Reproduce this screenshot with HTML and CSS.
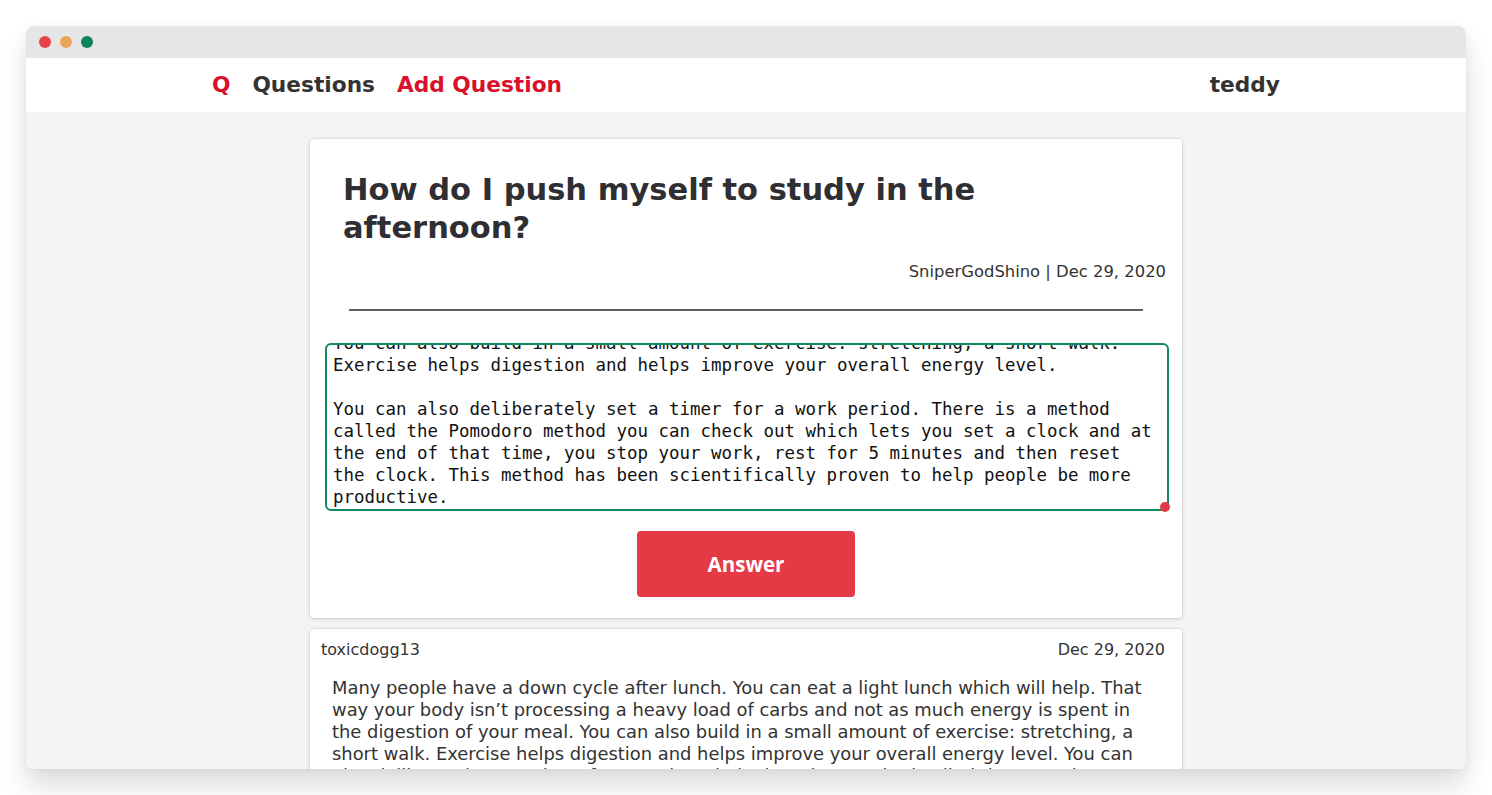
FILE: index.html
```html
<!DOCTYPE html>
<html lang="en">
<head>
<meta charset="utf-8">
<title>Question</title>
<link rel="stylesheet" href="styles.css">
</head>
<body>
<div class="window">
  <div class="titlebar">
    <span class="dot dot-red"></span>
    <span class="dot dot-orange"></span>
    <span class="dot dot-green"></span>
  </div>
  <header class="nav">
    <div class="nav-inner">
      <div class="nav-left">
        <a class="nav-link brand">Q</a>
        <a class="nav-link">Questions</a>
        <a class="nav-link accent">Add Question</a>
      </div>
      <a class="nav-link">teddy</a>
    </div>
  </header>
  <main class="main">
    <section class="card question">
      <h1 class="q-title">How do I push myself to study in the afternoon?</h1>
      <div class="q-meta">SniperGodShino | Dec 29, 2020</div>
      <hr class="divider">
      <div class="editor-wrap">
        <div class="editor">Many people have a down cycle after lunch. You can eat a light lunch which will help. That way your body isn’t processing a heavy load of carbs and not as much energy is spent in the digestion of your meal.
You can also build in a small amount of exercise: stretching, a short walk. Exercise helps digestion and helps improve your overall energy level.

You can also deliberately set a timer for a work period. There is a method called the Pomodoro method you can check out which lets you set a clock and at the end of that time, you stop your work, rest for 5 minutes and then reset the clock. This method has been scientifically proven to help people be more productive.</div>
        <span class="resize-dot"></span>
      </div>
      <button class="answer-btn">Answer</button>
    </section>
    <section class="card answer">
      <div class="a-meta">
        <span>toxicdogg13</span>
        <span>Dec 29, 2020</span>
      </div>
      <p class="a-body">Many people have a down cycle after lunch. You can eat a light lunch which will help. That way your body isn’t processing a heavy load of carbs and not as much energy is spent in the digestion of your meal. You can also build in a small amount of exercise: stretching, a short walk. Exercise helps digestion and helps improve your overall energy level. You can also deliberately set a timer for a work period. There is a method called the Pomodoro method you can check out which lets you set a clock and at the end of that time.</p>
    </section>
  </main>
</div>
</body>
</html>
```

FILE: styles.css
```css
* { box-sizing: border-box; }

html, body {
  margin: 0;
  height: 795px;
  background: #ffffff;
}

body {
  padding: 26px;
  font-family: "DejaVu Sans", "Liberation Sans", sans-serif;
  color: #333333;
  overflow: hidden;
}

.window {
  height: 743px;
  border-radius: 8px;
  overflow: hidden;
  display: flex;
  flex-direction: column;
  box-shadow: 0 18px 28px rgba(0, 0, 0, 0.13), 0 2px 10px rgba(0, 0, 0, 0.05);
}

.titlebar {
  height: 32px;
  flex: none;
  background: #e6e6e6;
  display: flex;
  align-items: center;
  gap: 9px;
  padding-left: 13px;
}

.dot {
  width: 12px;
  height: 12px;
  border-radius: 50%;
}
.dot-red { background: #e9414a; }
.dot-orange { background: #e9a65a; }
.dot-green { background: #0b8457; }

.nav {
  height: 54px;
  flex: none;
  background: #ffffff;
  display: flex;
  align-items: center;
  padding-bottom: 2px;
}

.nav-inner {
  width: 1068px;
  margin: 0 auto;
  display: flex;
  align-items: center;
  justify-content: space-between;
}

.nav-left {
  display: flex;
  align-items: center;
  gap: 22px;
}

.nav-link {
  font-size: 21.7px;
  font-weight: 700;
  color: #333333;
  text-decoration: none;
}

.brand, .accent { color: #d90f2b; }

.main {
  flex: 1;
  background: #f3f4f6;
  overflow: hidden;
  padding-top: 27px;
}

.card {
  width: 872px;
  margin: 0 auto;
  background: #ffffff;
  border-radius: 4px;
  box-shadow: 0 0 0 1px rgba(0, 0, 0, 0.04), 0 1px 4px rgba(0, 0, 0, 0.16);
}

.question {
  padding: 32px 16px 21px 15px;
  display: flex;
  flex-direction: column;
}

.q-title {
  margin: 0 17px 0 18px;
  font-size: 30.5px;
  line-height: 38px;
  font-weight: 700;
  color: #2f2e33;
}

.q-meta {
  margin-top: 14px;
  text-align: right;
  font-size: 16.4px;
  line-height: 22px;
  color: #333333;
}

.divider {
  width: 794px;
  align-self: center;
  margin: 26px 0 0 1px;
  border: 0;
  border-top: 2px solid #5f5f5f;
  height: 0;
}

.editor-wrap {
  position: relative;
  margin: 32px 0 0 0;
  width: 844px;
}

.editor {
  height: 168px;
  border: 2px solid #138a60;
  border-radius: 6px;
  padding: 0 12px 1px 6px;
  font-family: "DejaVu Sans Mono", "Liberation Mono", monospace;
  font-size: 17.45px;
  line-height: 22px;
  color: #111111;
  white-space: pre-wrap;
  display: flex;
  flex-direction: column;
  justify-content: flex-end;
  overflow: hidden;
}

.resize-dot {
  position: absolute;
  right: -1px;
  bottom: -1px;
  width: 10px;
  height: 10px;
  border-radius: 50%;
  background: #e63946;
}

.answer-btn {
  align-self: center;
  margin: 20px 0 0 1px;
  width: 218px;
  height: 66px;
  border: 0;
  border-radius: 4px;
  background: #e63946;
  color: #ffffff;
  font-family: "Open Sans", "DejaVu Sans", sans-serif;
  font-size: 20.5px;
  font-weight: 700;
}

.answer {
  margin-top: 11px;
  padding: 10px 17px 0 11px;
}

.a-meta {
  display: flex;
  justify-content: space-between;
  font-size: 16px;
  line-height: 22px;
  color: #333333;
}

.a-body {
  margin: 16px 6px 0 11px;
  font-size: 17.9px;
  line-height: 22px;
  color: #333333;
}
```
